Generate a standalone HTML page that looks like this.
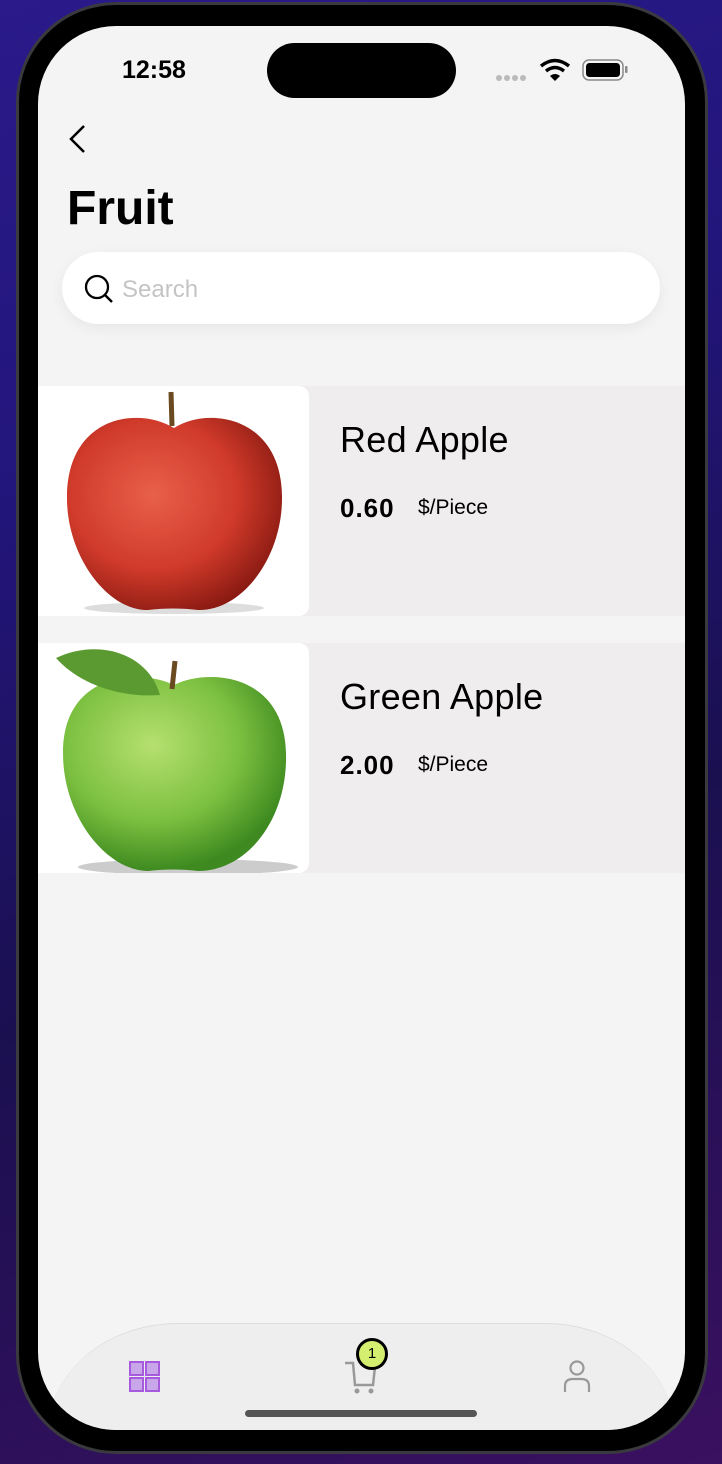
<!DOCTYPE html>
<html><head><meta charset="utf-8"><style>
*{margin:0;padding:0;box-sizing:border-box}
body{width:722px;height:1464px;overflow:hidden;background:linear-gradient(160deg,#2a1a8a 0%,#22157a 30%,#1a1050 60%,#3a1060 100%);font-family:"Liberation Sans",sans-serif;position:relative}
.frame{position:absolute;left:16px;top:2px;width:692px;height:1452px;border-radius:100px;background:#000;border:3px solid #3a3a3e}
.screen{position:absolute;left:38px;top:26px;width:647px;height:1404px;border-radius:78px;background:#f4f4f4;overflow:hidden}
.island{position:absolute;left:229px;top:17px;width:189px;height:55px;border-radius:28px;background:#000}
.time{position:absolute;left:84px;top:30px;font-size:25px;font-weight:bold;color:#000}
.title{position:absolute;left:29px;top:155px;font-size:48px;font-weight:bold;color:#000}
.search{position:absolute;left:24px;top:226px;width:598px;height:72px;border-radius:36px;background:#fff;box-shadow:0 4px 14px rgba(0,0,0,.06)}
.search span{position:absolute;left:60px;top:24px;font-size:24px;color:#c4c4c4}
.row{position:absolute;left:0;width:647px;height:230px;background:#efeded}
.img{position:absolute;left:0;top:0;width:271px;height:230px;background:#fff;border-radius:0 10px 10px 0;overflow:hidden}
.name{position:absolute;left:302px;top:33px;font-size:36px;color:#000;letter-spacing:0.3px}
.price{position:absolute;left:302px;top:107px;font-size:26px;font-weight:bold;color:#000;letter-spacing:1px}
.unit{position:absolute;left:380px;top:110px;font-size:21px;color:#000}
.tab{position:absolute;left:10px;top:1297px;width:627px;height:140px;border-radius:130px 130px 0 0/110px 110px 0 0;background:#eeeeee;border-top:1px solid #ddd}
.home{position:absolute;left:207px;top:1384px;width:232px;height:7px;border-radius:4px;background:#555}
</style></head><body>
<div class="frame"></div>
<div class="screen">
<div class="time">12:58</div>
<div class="island"></div>
<svg style="position:absolute;left:456px;top:30px" width="140" height="30">
<g fill="#bbb"><circle cx="5" cy="22" r="3"/><circle cx="13" cy="22" r="3"/><circle cx="21" cy="22" r="3"/><circle cx="29" cy="22" r="3"/></g>
<path d="M47 10 Q61 -1 75 10" stroke="#000" stroke-width="3.5" fill="none"/><path d="M52 15 Q61 8 70 15" stroke="#000" stroke-width="3.5" fill="none"/><path d="M56 20 L61 25 L66 20 Q61 16 56 20Z" fill="#000"/>
<rect x="89" y="4" width="40" height="20" rx="6" fill="none" stroke="#888" stroke-width="1.5"/>
<rect x="92" y="7" width="34" height="14" rx="3.5" fill="#000"/>
<rect x="131" y="10" width="2.5" height="7" rx="1" fill="#888"/>
</svg>
<svg style="position:absolute;left:28px;top:98px" width="24" height="32"><path d="M18 2 L5 15 L18 28" stroke="#000" stroke-width="2.5" fill="none"/></svg>
<div class="title">Fruit</div>
<div class="search">
<svg style="position:absolute;left:22px;top:22px" width="32" height="32"><circle cx="13" cy="13" r="11" stroke="#000" stroke-width="2.3" fill="none"/><path d="M21 21 L28 28" stroke="#000" stroke-width="2.5"/></svg>
<span>Search</span></div>
<div class="row" style="top:360px"><div class="img">
<svg width="271" height="230"><defs><radialGradient id="r" cx="40%" cy="40%" r="65%"><stop offset="0" stop-color="#e8604a"/><stop offset=".6" stop-color="#d03a2a"/><stop offset="1" stop-color="#8a1a12"/></radialGradient></defs>
<ellipse cx="136" cy="222" rx="90" ry="6" fill="#ddd"/>
<path d="M136 42 C100 20 30 30 29 110 C28 170 70 225 110 224 C125 222 145 222 160 224 C205 225 245 170 244 110 C243 30 170 20 136 42Z" fill="url(#r)"/>
<path d="M134 40 L133 6" stroke="#6a4a20" stroke-width="5"/></svg></div>
<div class="name">Red Apple</div><div class="price">0.60</div><div class="unit">$/Piece</div></div>
<div class="row" style="top:617px"><div class="img">
<svg width="271" height="230"><defs><radialGradient id="g" cx="40%" cy="35%" r="65%"><stop offset="0" stop-color="#b6e070"/><stop offset=".6" stop-color="#7cc040"/><stop offset="1" stop-color="#3e8a20"/></radialGradient></defs>
<ellipse cx="150" cy="224" rx="110" ry="8" fill="#ccc"/>
<path d="M136 42 C100 25 25 30 25 110 C25 175 70 228 110 228 C125 226 145 226 160 228 C210 228 250 175 248 110 C246 30 170 25 136 42Z" fill="url(#g)"/>
<path d="M134 46 L137 18" stroke="#6a4a20" stroke-width="5"/>
<path d="M18 15 C60 -5 110 10 122 52 C80 55 40 40 18 15Z" fill="#5a9a30"/></svg></div>
<div class="name">Green Apple</div><div class="price">2.00</div><div class="unit">$/Piece</div></div>
<div class="tab"></div>
<svg style="position:absolute;left:91px;top:1335px" width="32" height="32"><g fill="#c9a6e8" stroke="#a55ae0" stroke-width="2"><rect x="1" y="1" width="13" height="13"/><rect x="17" y="1" width="13" height="13"/><rect x="1" y="17" width="13" height="13"/><rect x="17" y="17" width="13" height="13"/></g></svg>
<svg style="position:absolute;left:305px;top:1335px" width="36" height="34"><path d="M2 2 H10 L12 24 H30 L32 6" stroke="#999" stroke-width="2.5" fill="none"/><circle cx="14" cy="30" r="2.5" fill="#999"/><circle cx="28" cy="30" r="2.5" fill="#999"/></svg>
<div style="position:absolute;left:318px;top:1312px;width:32px;height:32px;border-radius:50%;background:#d4ef70;border:3px solid #000;font-size:15px;text-align:center;line-height:26px;color:#000">1</div>
<svg style="position:absolute;left:524px;top:1333px" width="30" height="36"><circle cx="15" cy="9" r="6.5" stroke="#999" stroke-width="2.2" fill="none"/><path d="M3 33 V27 Q3 20 11 20 H19 Q27 20 27 27 V33" stroke="#999" stroke-width="2.2" fill="none"/></svg>
<div class="home"></div>
</div>
</body></html>
